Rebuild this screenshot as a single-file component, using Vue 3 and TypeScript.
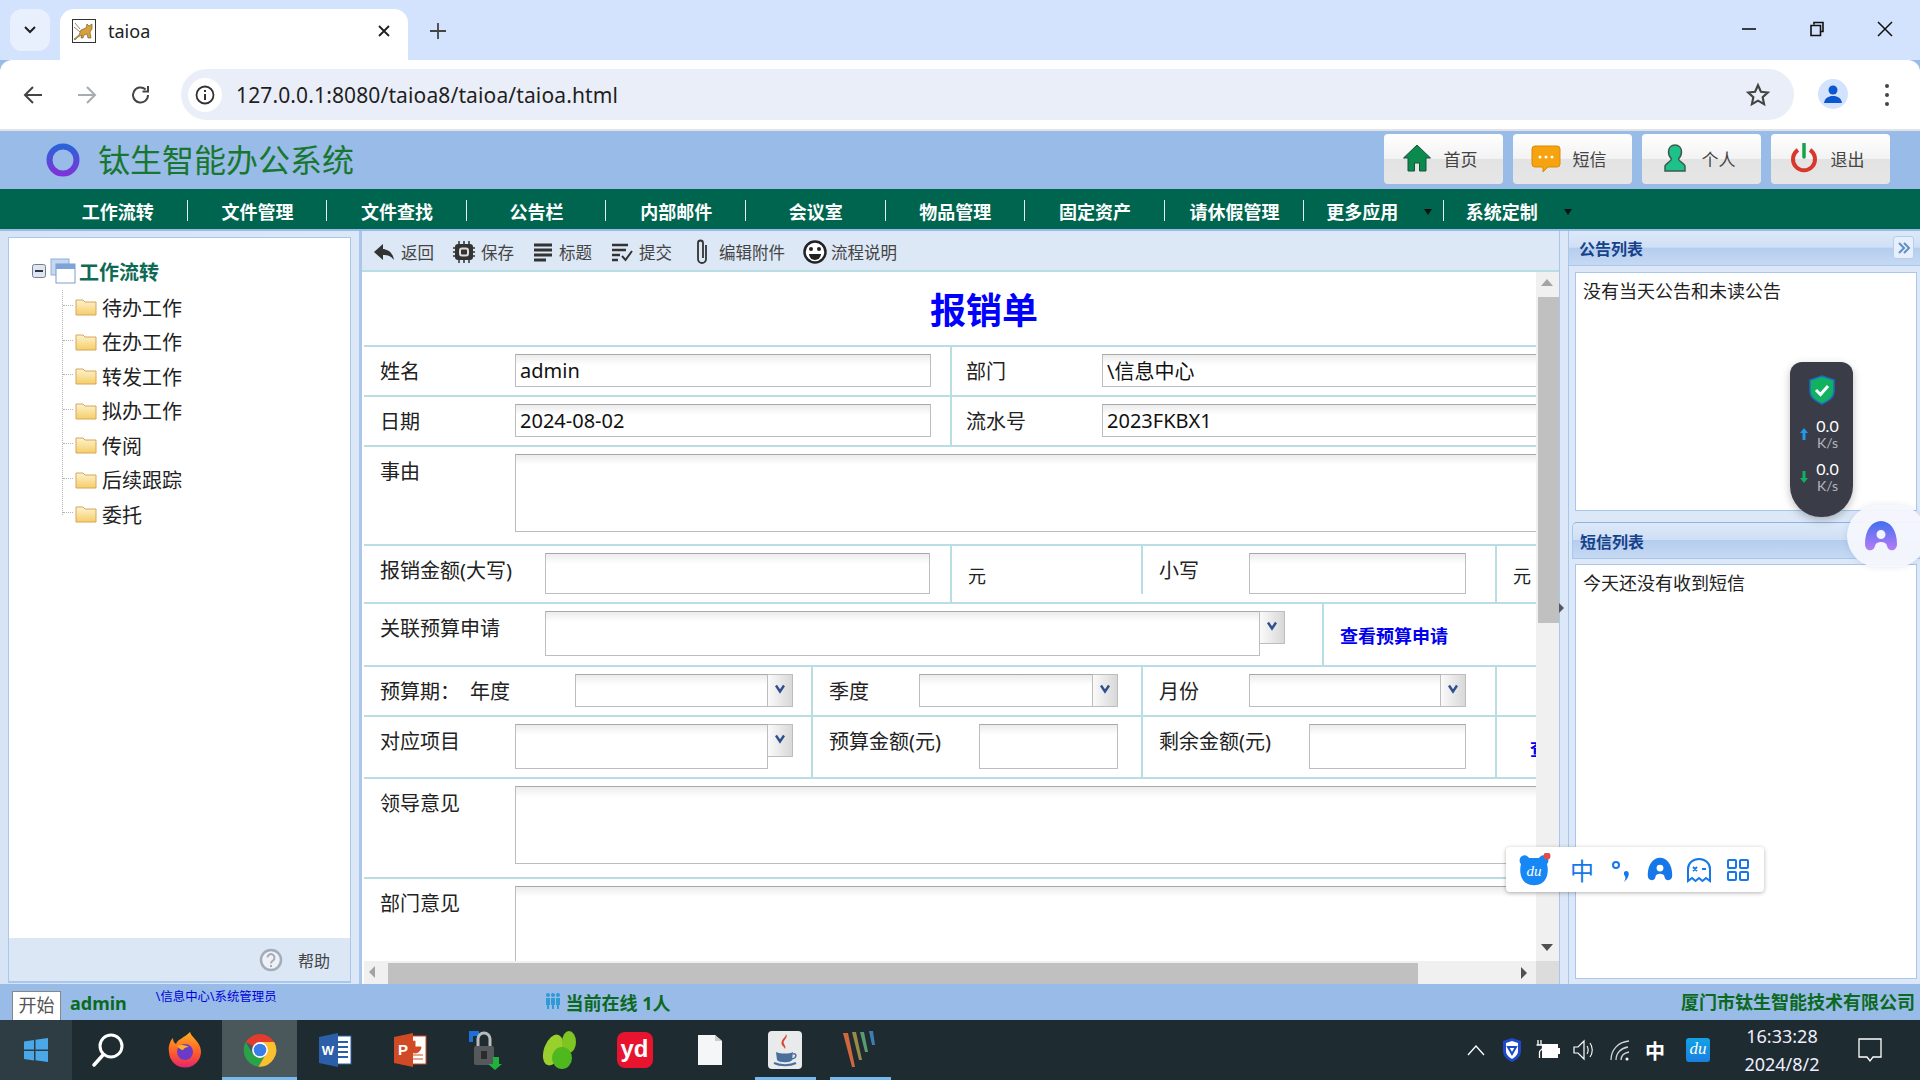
<script setup lang="ts">
const navItems = [
  { label: "工作流转" },
  { label: "文件管理" },
  { label: "文件查找" },
  { label: "公告栏" },
  { label: "内部邮件" },
  { label: "会议室" },
  { label: "物品管理" },
  { label: "固定资产" },
  { label: "请休假管理" },
  { label: "更多应用", more: true },
  { label: "系统定制", more: true },
];

const treeItems = ["待办工作", "在办工作", "转发工作", "拟办工作", "传阅", "后续跟踪", "委托"];
</script>

<template>
  <div class="desk">
    <!-- browser tabs -->
    <div class="tabstrip">
      <div class="tab-search">
        <svg width="14" height="10" viewBox="0 0 14 10"><path d="M2 2l5 5 5-5" fill="none" stroke="#1f1f1f" stroke-width="2" /></svg>
      </div>
      <div class="tab">
        <svg class="favicon" width="24" height="24" viewBox="0 0 24 24">
          <rect x=".5" y=".5" width="23" height="23" fill="#fff" stroke="#333" />
          <path d="M2 20l5-4 2-5 5-2 1-4 2 2 3-2v5l-2 3 1 6h-3l-1-4-3 1-1 3H9l1-3-4 2-3 3z" fill="#d9a13b" stroke="#6b5020" stroke-width=".6" />
          <path d="M2 8l6 5M3 4l5 6" stroke="#6b5020" stroke-width=".7" />
        </svg>
        <span class="tab-title">taioa</span>
        <svg class="tab-close" width="14" height="14" viewBox="0 0 14 14"><path d="M2 2l10 10M12 2L2 12" stroke="#1f1f1f" stroke-width="1.8" /></svg>
      </div>
      <svg class="tab-new" width="18" height="18" viewBox="0 0 18 18"><path d="M9 1v16M1 9h16" stroke="#444" stroke-width="1.8" /></svg>
      <div class="win-controls">
        <svg width="16" height="16" viewBox="0 0 16 16"><path d="M1 8h14" stroke="#111" stroke-width="1.6" /></svg>
        <svg width="16" height="16" viewBox="0 0 16 16"><path d="M5 3.5V1.5h9v9h-2.5M2 4.5h9.5v10H2z" fill="none" stroke="#111" stroke-width="1.6" /></svg>
        <svg width="16" height="16" viewBox="0 0 16 16"><path d="M1 1l14 14M15 1L1 15" stroke="#111" stroke-width="1.5" /></svg>
      </div>
    </div>

    <!-- browser toolbar -->
    <div class="toolbar">
      <div class="tool-btn">
        <svg width="22" height="22" viewBox="0 0 22 22"><path d="M20 11H4M11 3l-8 8 8 8" fill="none" stroke="#444" stroke-width="2" /></svg>
      </div>
      <div class="tool-btn">
        <svg width="22" height="22" viewBox="0 0 22 22"><path d="M2 11h16M11 3l8 8-8 8" fill="none" stroke="#a8abb0" stroke-width="2" /></svg>
      </div>
      <div class="tool-btn">
        <svg width="22" height="22" viewBox="0 0 22 22"><path d="M18 11a7.5 7.5 0 1 1-2.4-5.5M18 2v5.5h-5.5" fill="none" stroke="#444" stroke-width="2" /></svg>
      </div>
      <div class="omnibox">
        <div class="omni-info">
          <svg width="22" height="22" viewBox="0 0 22 22">
            <circle cx="11" cy="11" r="8.5" fill="none" stroke="#333" stroke-width="1.8" />
            <path d="M11 10v6M11 6v2" stroke="#333" stroke-width="2" />
          </svg>
        </div>
        <span class="omni-url">127.0.0.1:8080/taioa8/taioa/taioa.html</span>
        <svg class="omni-star" width="26" height="26" viewBox="0 0 24 24"><path d="M12 3l2.7 6 6.3.7-4.7 4.3 1.3 6.4-5.6-3.2-5.6 3.2 1.3-6.4L3 9.7l6.3-.7z" fill="none" stroke="#444" stroke-width="2" /></svg>
      </div>
      <div class="avatar">
        <svg width="20" height="22" viewBox="0 0 20 22"><circle cx="10" cy="7" r="4.5" fill="#0b57d0" /><path d="M1 20c1-5 4-7 9-7s8 2 9 7z" fill="#0b57d0" /></svg>
      </div>
      <div class="tool-dots"><i></i><i></i><i></i></div>
    </div>

    <!-- oa header -->
    <header class="oa-head">
      <svg class="oa-logo" width="36" height="36" viewBox="0 0 36 36">
        <defs>
          <linearGradient id="ringGrad" x1="0" y1="0" x2="0" y2="1">
            <stop offset="0" stop-color="#2a63d8" />
            <stop offset="1" stop-color="#7c34d8" />
          </linearGradient>
        </defs>
        <circle cx="18" cy="18" r="13.5" fill="none" stroke="url(#ringGrad)" stroke-width="6" />
      </svg>
      <div class="oa-title">钛生智能办公系统</div>
      <div class="head-btns">
        <div class="head-btn">
          <svg width="30" height="30" viewBox="0 0 30 30"><path d="M15 2L1.5 15H6v13h6.5v-8h5v8H24V15h4.5z" fill="#0a8a4c" stroke="#14523a" stroke-width="1" /></svg>
          <span>首页</span>
        </div>
        <div class="head-btn">
          <svg width="30" height="30" viewBox="0 0 30 30">
            <path d="M4 3h22a3 3 0 0 1 3 3v15a3 3 0 0 1-3 3H17l-5 5v-5H4a3 3 0 0 1-3-3V6a3 3 0 0 1 3-3z" fill="#f7a20f" stroke="#d98a08" />
            <circle cx="9" cy="14" r="1.5" fill="#fff" /><circle cx="15" cy="14" r="1.5" fill="#fff" /><circle cx="21" cy="14" r="1.5" fill="#fff" />
          </svg>
          <span>短信</span>
        </div>
        <div class="head-btn">
          <svg width="30" height="30" viewBox="0 0 30 30">
            <path d="M15 2c4 0 6.5 3 6.5 7 0 3-1.5 5.5-3 7 0 2 5.5 4 6.5 7v5H5v-5c1-3 6.5-5 6.500-7-1.500-1.500-3-4-3-7 0-4 2.500-7 6.500-7z" fill="#1cc28a" stroke="#3c5a50" stroke-width="1.5" />
          </svg>
          <span>个人</span>
        </div>
        <div class="head-btn">
          <svg width="30" height="30" viewBox="0 0 30 30">
            <path d="M9 7a11 11 0 1 0 12 0" fill="none" stroke="#d8382c" stroke-width="4" />
            <path d="M15 1v13" stroke="#16a34a" stroke-width="3.5" stroke-linecap="round" />
          </svg>
          <span>退出</span>
        </div>
      </div>
    </header>

    <!-- main menu -->
    <nav class="oa-nav">
      <div v-for="item in navItems" :key="item.label" class="nav-item" :class="{ 'has-more': item.more }">
        <span>{{ item.label }}</span>
        <i v-if="item.more" class="nav-arrow"></i>
      </div>
    </nav>

    <div class="work">
      <!-- tree -->
      <aside class="side">
        <div class="side-box">
          <div class="tree">
            <div class="tree-root">
              <svg class="tree-toggle" width="14" height="14" viewBox="0 0 14 14">
                <rect x=".5" y=".5" width="13" height="13" rx="2" fill="#dfe6f0" stroke="#6f7f94" />
                <path d="M3 7h8" stroke="#334" stroke-width="2" />
              </svg>
              <svg class="tree-root-icon" width="26" height="26" viewBox="0 0 26 26">
                <rect x="1" y="1" width="18" height="16" fill="#c6d8f0" stroke="#8fb0dc" />
                <rect x="6" y="6" width="19" height="19" fill="#fff" stroke="#7c9cc8" />
                <rect x="6" y="6" width="19" height="5" fill="#7da4d8" />
              </svg>
              <strong>工作流转</strong>
            </div>
            <ul class="tree-list">
              <li v-for="name in treeItems" :key="name" class="tree-item">
                <svg width="22" height="18" viewBox="0 0 22 18">
                  <defs>
                    <linearGradient id="folderGrad" x1="0" y1="0" x2="0" y2="1">
                      <stop offset="0" stop-color="#fdf3d0" />
                      <stop offset="1" stop-color="#f6cd68" />
                    </linearGradient>
                  </defs>
                  <path d="M1 2h7l2 2h11v13H1z" fill="url(#folderGrad)" stroke="#d4a65a" />
                </svg>
                <span>{{ name }}</span>
              </li>
            </ul>
          </div>
          <div class="side-foot">
            <svg width="24" height="24" viewBox="0 0 24 24">
              <circle cx="12" cy="12" r="10" fill="#eef2f7" stroke="#a3acb8" stroke-width="2.5" />
              <path d="M8.5 9.5a3.5 3.5 0 1 1 5.5 3c-1.5 1-2 1.5-2 3M12 17v2" fill="none" stroke="#a3acb8" stroke-width="2" />
            </svg>
            <span>帮助</span>
          </div>
        </div>
      </aside>

      <!-- form -->
      <main class="center">
        <div class="form-tools">
          <div class="ft-item">
            <svg width="22" height="20" viewBox="0 0 22 20"><path d="M10 2L1 10l9 8v-5c5 0 8 1 11 5-1-6-4-10-11-11z" fill="#333" /></svg>
            <span>返回</span>
          </div>
          <div class="ft-item">
            <svg width="22" height="24" viewBox="0 0 22 24">
              <path d="M5 4h12a3 3 0 0 1 3 3v10a3 3 0 0 1-3 3H5a3 3 0 0 1-3-3V7a3 3 0 0 1 3-3z" fill="#333" />
              <path d="M6 1v3M11 1v3M16 1v3M6 20v3M11 20v3M16 20v3M0 8h2M0 12h2M0 16h2M20 8h2M20 12h2M20 16h2" stroke="#333" stroke-width="1.5" />
              <rect x="7" y="8.5" width="8" height="7" rx="2" fill="none" stroke="#ddd" stroke-width="2" />
            </svg>
            <span>保存</span>
          </div>
          <div class="ft-item">
            <svg width="20" height="20" viewBox="0 0 20 20"><path d="M1 3h18M1 8h18M1 13h18M1 18h12" stroke="#333" stroke-width="3" /></svg>
            <span>标题</span>
          </div>
          <div class="ft-item">
            <svg width="22" height="20" viewBox="0 0 22 20"><path d="M1 3h16M1 8h14M1 13h8M1 18h6" stroke="#333" stroke-width="2.5" /><path d="M11 14l3.5 4L21 9" fill="none" stroke="#333" stroke-width="2" /></svg>
            <span>提交</span>
          </div>
          <div class="ft-item ft-clip">
            <svg width="16" height="26" viewBox="0 0 16 26"><path d="M12 6v14a4 4 0 0 1-8 0V4a2.5 2.5 0 0 1 5 0v15" fill="none" stroke="#333" stroke-width="1.8" /></svg>
            <span>编辑附件</span>
          </div>
          <div class="ft-item ft-smile">
            <svg width="24" height="24" viewBox="0 0 24 24">
              <circle cx="12" cy="12" r="10.5" fill="#fff" stroke="#222" stroke-width="2.5" />
              <circle cx="8" cy="9" r="2" fill="#222" /><circle cx="16" cy="9" r="2" fill="#222" />
              <path d="M6 14h12a6 6 0 0 1-12 0z" fill="#222" />
            </svg>
            <span>流程说明</span>
          </div>
        </div>

        <div class="sheet">
          <div class="sheet-view">
            <div class="sheet-table">
              <div class="row row-title"><h1>报销单</h1></div>

              <div class="row row-two r-50">
                <div class="cell"><label class="lb-135">姓名</label><input class="fld w-416" value="admin" /></div>
                <div class="cell cell-b"><label class="lb-136">部门</label><input class="fld w-500" value="\信息中心" /></div>
              </div>
              <div class="row row-two r-50">
                <div class="cell"><label class="lb-135">日期</label><input class="fld w-416" value="2024-08-02" /></div>
                <div class="cell cell-b"><label class="lb-136">流水号</label><input class="fld w-500" value="2023FKBX1" /></div>
              </div>
              <div class="row r-99">
                <div class="cell"><label class="lb-135">事由</label><textarea class="fld area-78"></textarea></div>
              </div>

              <div class="row row-four r-58">
                <div class="cell"><label class="lb-165">报销金额(大写)</label><input class="fld w-385 h-41" /></div>
                <div class="cell unit">元</div>
                <div class="cell"><label class="lb-90">小写</label><input class="fld w-217 h-41" /></div>
                <div class="cell unit">元</div>
              </div>

              <div class="row row-link r-63">
                <div class="cell">
                  <label class="lb-165">关联预算申请</label>
                  <div class="combo">
                    <input class="fld w-715 h-45" />
                    <span class="cmb-btn"><svg width="12" height="10" viewBox="0 0 12 10"><path d="M2 1.5l4 6 4-6" fill="none" stroke="#2f4f8f" stroke-width="2.4" /></svg></span>
                  </div>
                </div>
                <div class="cell unit link-cell"><a class="blue-link">查看预算申请</a></div>
              </div>

              <div class="row row-four2 r-50">
                <div class="cell">
                  <label class="lb-90">预算期：</label><label class="lb-105">年度</label>
                  <div class="combo">
                    <input class="fld w-193 h-33" />
                    <span class="cmb-btn"><svg width="12" height="10" viewBox="0 0 12 10"><path d="M2 1.5l4 6 4-6" fill="none" stroke="#2f4f8f" stroke-width="2.4" /></svg></span>
                  </div>
                </div>
                <div class="cell">
                  <label class="lb-90">季度</label>
                  <div class="combo">
                    <input class="fld w-174 h-33" />
                    <span class="cmb-btn"><svg width="12" height="10" viewBox="0 0 12 10"><path d="M2 1.5l4 6 4-6" fill="none" stroke="#2f4f8f" stroke-width="2.4" /></svg></span>
                  </div>
                </div>
                <div class="cell">
                  <label class="lb-90">月份</label>
                  <div class="combo">
                    <input class="fld w-192 h-33" />
                    <span class="cmb-btn"><svg width="12" height="10" viewBox="0 0 12 10"><path d="M2 1.5l4 6 4-6" fill="none" stroke="#2f4f8f" stroke-width="2.4" /></svg></span>
                  </div>
                </div>
                <div class="cell"></div>
              </div>

              <div class="row row-four2 r-62">
                <div class="cell">
                  <label class="lb-135">对应项目</label>
                  <div class="combo">
                    <input class="fld w-253 h-45" />
                    <span class="cmb-btn"><svg width="12" height="10" viewBox="0 0 12 10"><path d="M2 1.5l4 6 4-6" fill="none" stroke="#2f4f8f" stroke-width="2.4" /></svg></span>
                  </div>
                </div>
                <div class="cell"><label class="lb-150">预算金额(元)</label><input class="fld w-139 h-45" /></div>
                <div class="cell"><label class="lb-150">剩余金额(元)</label><input class="fld w-157 h-45" /></div>
                <div class="cell unit link-cell link-far"><a class="blue-link">查看预算</a></div>
              </div>

              <div class="row r-100">
                <div class="cell"><label class="lb-135">领导意见</label><textarea class="fld area-78"></textarea></div>
              </div>
              <div class="row r-100">
                <div class="cell"><label class="lb-135">部门意见</label><textarea class="fld area-78"></textarea></div>
              </div>
            </div>
          </div>

          <div class="vbar">
            <i class="arr arr-up"></i>
            <div class="vthumb"></div>
            <i class="arr arr-down"></i>
          </div>
          <div class="hbar">
            <i class="arr arr-left"></i>
            <div class="hthumb"></div>
            <i class="arr arr-right"></i>
          </div>
          <div class="corner"></div>
        </div>
      </main>

      <div class="splitter"><i></i></div>

      <!-- right panels -->
      <aside class="right">
        <div class="rp rp-top">
          <div class="rp-title">
            <span>公告列表</span>
            <div class="rp-collapse">
              <svg width="14" height="14" viewBox="0 0 14 14"><path d="M2 2l5 5-5 5M7 2l5 5-5 5" fill="none" stroke="#5f8fc8" stroke-width="2" /></svg>
            </div>
          </div>
          <div class="rp-wrap"><div class="rp-body">没有当天公告和未读公告</div></div>
        </div>
        <div class="rp rp-bottom">
          <div class="rp-title rp-title2"><span>短信列表</span></div>
          <div class="rp-wrap"><div class="rp-body">今天还没有收到短信</div></div>
        </div>
      </aside>
    </div>

    <footer class="status">
      <div class="start-btn">开始</div>
      <span class="st-user">admin</span>
      <span class="st-dept">\信息中心\系统管理员</span>
      <svg class="st-icon" width="16" height="18" viewBox="0 0 16 18" fill="#2e9ad6">
        <circle cx="3" cy="3" r="2" /><circle cx="8" cy="3" r="2" /><circle cx="13" cy="3" r="2" />
        <path d="M1 6h4v7H4v4H2v-4H1zM6 6h4v7H9v4H7v-4H6zM11 6h4v7h-1v4h-2v-4h-1z" />
      </svg>
      <span class="st-online">当前在线 1人</span>
      <span class="st-company">厦门市钛生智能技术有限公司</span>
    </footer>

    <div class="taskbar">
      <div class="task-cell task-start">
        <svg width="26" height="26" viewBox="0 0 26 26" fill="#4aa8e8"><path d="M1 4.5l10-1.5v9.5H1zM12.5 2.800L25 1v11.500H12.500zM1 14h10v9.500L1 22zM12.500 14H25v11l-12.500-1.800z" /></svg>
      </div>
      <div class="task-cell task-search">
        <svg width="34" height="36" viewBox="0 0 34 36"><circle cx="20" cy="14" r="11" fill="none" stroke="#fff" stroke-width="3" /><path d="M12 23L3 33" stroke="#fff" stroke-width="3.5" stroke-linecap="round" /></svg>
      </div>
      <div class="task-cell">
        <svg width="36" height="38" viewBox="0 0 36 38">
          <defs>
            <linearGradient id="foxGrad" x1="0" y1="0" x2="0" y2="1">
              <stop offset="0" stop-color="#ffb01f" /><stop offset=".6" stop-color="#ff5a2a" /><stop offset="1" stop-color="#e5256e" />
            </linearGradient>
          </defs>
          <path d="M23 1c1 5 10 9 11 19A16 16 0 0 1 2 21C1 15 3 10 6 7c0 3 1 5 3 6 2-5 8-6 14-12z" fill="url(#foxGrad)" />
          <circle cx="18" cy="21" r="8" fill="#6b3bc8" />
          <path d="M10 15c4-2 9-1 12 1-3 0-5 1-6 3-2 0-4-2-6-4z" fill="#ffb01f" />
        </svg>
      </div>
      <div class="task-cell task-active">
        <svg width="38" height="38" viewBox="0 0 48 48">
          <path d="M24 24L6 14A21 21 0 0 1 42 14H24z" fill="#e33b2e" />
          <path d="M24 24l-9 5L6 14A21 21 0 0 0 22 45l9-15z" fill="#2aa24a" />
          <path d="M24 14h18a21 21 0 0 1-20 31l10-17z" fill="#fbc02d" />
          <circle cx="24" cy="24" r="10" fill="#fff" /><circle cx="24" cy="24" r="8" fill="#3a7de8" />
        </svg>
      </div>
      <div class="task-cell">
        <svg width="34" height="34" viewBox="0 0 34 34">
          <rect x="10" y="3" width="23" height="28" fill="#fff" stroke="#2b5faa" />
          <path d="M18 9h12M18 14h12M18 19h12M18 24h12" stroke="#2b5faa" stroke-width="2" />
          <path d="M1 4l19-4v34L1 30z" fill="#2b5faa" />
          <text x="10" y="22" font-size="13" font-family="Liberation Sans" font-weight="700" fill="#fff" text-anchor="middle">W</text>
        </svg>
      </div>
      <div class="task-cell">
        <svg width="34" height="34" viewBox="0 0 34 34">
          <rect x="10" y="3" width="23" height="28" fill="#fff" stroke="#d04a25" />
          <path d="M22 8a6 6 0 1 0 6 6h-6zM20 22h10M20 26h10" fill="#d04a25" stroke="#d04a25" />
          <path d="M1 4l19-4v34L1 30z" fill="#d04a25" />
          <text x="10" y="22" font-size="15" font-family="Liberation Sans" font-weight="700" fill="#fff" text-anchor="middle">P</text>
        </svg>
      </div>
      <div class="task-cell">
        <svg width="36" height="40" viewBox="0 0 36 40">
          <path d="M2 1h10v5H6v6H2z" fill="#1a6fd8" />
          <rect x="7" y="16" width="20" height="19" rx="2" fill="#55595c" />
          <path d="M11 16V9a6 6 0 0 1 12 0v7" fill="none" stroke="#b9bcbe" stroke-width="3" />
          <rect x="14" y="21" width="6" height="8" fill="#2a2c2e" />
          <path d="M26 27h6v7h3l-7 6-7-6h5z" fill="#1fb23c" />
        </svg>
      </div>
      <div class="task-cell">
        <svg width="36" height="40" viewBox="0 0 36 40">
          <ellipse cx="11" cy="20" rx="9" ry="16" fill="#9ad02e" transform="rotate(20 11 20)" />
          <ellipse cx="27" cy="12" rx="7" ry="11" fill="#7ec422" />
          <ellipse cx="20" cy="28" rx="10" ry="11" fill="#4fb81e" />
        </svg>
      </div>
      <div class="task-cell">
        <div class="yd-tile">yd</div>
      </div>
      <div class="task-cell">
        <svg width="26" height="32" viewBox="0 0 26 36" preserveAspectRatio="none"><path d="M1 1h17l7 7v27H1z" fill="#f4f6f8" /><path d="M18 1v7h7z" fill="#c8ccd0" /></svg>
      </div>
      <div class="task-cell task-open">
        <svg width="36" height="40" viewBox="0 0 36 40">
          <rect x="1" y="1" width="34" height="38" rx="4" fill="#e8eaec" />
          <path d="M19 4c3 4-4 6-2 10 1 2 2 3 1 5-1-3-5-4-3-8 1-3 4-4 4-7z" fill="#d9482b" />
          <path d="M9 22c5 2 13 2 17 0l-1 8c-1 3-13 3-15 0z" fill="#4a6f9c" />
          <path d="M7 33c6 3 16 3 22 0" fill="none" stroke="#4a6f9c" stroke-width="2" />
          <path d="M26 24c4-1 4 4-1 5" fill="none" stroke="#4a6f9c" stroke-width="1.5" />
        </svg>
      </div>
      <div class="task-cell task-open">
        <svg width="36" height="40" viewBox="0 0 36 40">
          <path d="M1 3h5l7 34h-3z" fill="#d0673f" />
          <path d="M10 2h4l6 28h-3z" fill="#9a8a4a" />
          <path d="M18 2h4l4 20h-3z" fill="#5a9a72" />
          <path d="M27 1h4l2 14h-3z" fill="#3f7db8" />
        </svg>
      </div>

      <div class="tray">
        <div class="tray-cell t36">
          <svg width="18" height="12" viewBox="0 0 18 12"><path d="M1 11l8-9 8 9" fill="none" stroke="#fff" stroke-width="1.3" /></svg>
        </div>
        <div class="tray-cell t36">
          <svg width="22" height="26" viewBox="0 0 22 26">
            <path d="M11 1l9 3v10c0 6-5 9-9 11-4-2-9-5-9-11V4z" fill="#1f49c8" />
            <path d="M11 4l6 2v8c0 4-3 6-6 8-3-2-6-4-6-8V6z" fill="#fff" />
            <path d="M7 10h8l-4 7z" fill="none" stroke="#1f49c8" stroke-width="2" />
          </svg>
        </div>
        <div class="tray-cell t36">
          <svg width="26" height="22" viewBox="0 0 26 22">
            <rect x="7" y="5" width="16" height="14" fill="#fff" /><rect x="23" y="9" width="2" height="6" fill="#fff" />
            <path d="M3 1v5M6 1v5M1.5 6h6v3c0 2-3 2-3 4v6" fill="none" stroke="#fff" stroke-width="1.3" />
          </svg>
        </div>
        <div class="tray-cell t36">
          <svg width="24" height="24" viewBox="0 0 24 24"><path d="M2 9h4l6-6v18l-6-6H2z" fill="none" stroke="#fff" stroke-width="1.2" /><path d="M15 8c1.5 2 1.5 6 0 8M18 5c3 4 3 10 0 14" fill="none" stroke="#fff" stroke-width="1.1" /></svg>
        </div>
        <div class="tray-cell t36">
          <svg width="24" height="24" viewBox="0 0 24 24"><path d="M3 22C3 12 10 4 21 3M8 22c0-7 5-12 12-13M13 22c0-4 3-7 8-8" fill="none" stroke="#cfd4d6" stroke-width="1.3" /><circle cx="19" cy="21" r="1.5" fill="#fff" /></svg>
        </div>
        <div class="tray-cell t34 tray-ime">中</div>
        <div class="tray-cell t52"><div class="du-tile">du</div></div>
        <div class="clock">
          <span>16:33:28</span>
          <span>2024/8/2</span>
        </div>
        <div class="tray-cell t60">
          <svg width="26" height="26" viewBox="0 0 26 26"><path d="M2 2h22v18h-8l-3 4-3-4H2z" fill="none" stroke="#fff" stroke-width="1.3" /></svg>
        </div>
      </div>
    </div>

    <!-- floating widgets over the page -->
    <div class="net-widget">
      <svg width="26" height="30" viewBox="0 0 26 30">
        <path d="M13 1l12 4v11c0 7-6 10-12 13C7 26 1 23 1 16V5z" fill="#10b160" stroke="#1f68c8" stroke-width="1.5" />
        <path d="M7 15l4.5 4.5L19 11" fill="none" stroke="#fff" stroke-width="3" />
      </svg>
      <div class="net-row net-first">
        <svg width="8" height="12" viewBox="0 0 8 12"><path d="M4 0l4 5H5.5v7h-3V5H0z" fill="#1e9ae8" /></svg>
        <div class="net-val"><b>0.0</b><small>K/s</small></div>
      </div>
      <div class="net-row">
        <svg width="8" height="12" viewBox="0 0 8 12"><path d="M4 12L0 7h2.5V0h3v7H8z" fill="#10b160" /></svg>
        <div class="net-val"><b>0.0</b><small>K/s</small></div>
      </div>
    </div>

    <div class="ai-float">
      <svg width="34" height="34" viewBox="0 0 34 34">
        <defs>
          <linearGradient id="aiGrad" x1="0" y1="0" x2="0" y2="1">
            <stop offset="0" stop-color="#3f6ff0" /><stop offset="1" stop-color="#b77cf6" />
          </linearGradient>
        </defs>
        <path fill-rule="evenodd" d="M17 1C8 1 1 10 1 24c0 8 9 8 10 2 .5-3 3-4 6-4s5.500 1 6 4c1 6 10 6 10-2C33 10 26 1 17 1zm0 9a4.500 4.500 0 1 1 0 9 4.500 4.500 0 0 1 0-9z" fill="url(#aiGrad)" />
      </svg>
    </div>

    <div class="ime-bar">
      <svg class="ime-du" width="34" height="34" viewBox="0 0 34 34">
        <path d="M5 3c3-2 6 0 7 2h10c1-2 4-4 7-2s3 6 1 8c2 8 0 16-5 19-5 3-11 3-16 0-5-3-7-11-5-19-2-2-2-6 1-8z" fill="#1787f5" />
        <text x="17" y="23" font-size="15" font-family="Liberation Serif" font-style="italic" fill="#fff" text-anchor="middle">du</text>
        <circle cx="30" cy="3" r="3.5" fill="#e34b4b" />
      </svg>
      <span class="ime-slot ime-zh">中</span>
      <span class="ime-slot"><svg width="24" height="28" viewBox="0 0 24 28"><circle cx="7" cy="9" r="3" fill="none" stroke="#1677e8" stroke-width="2" /><path d="M17 15c3 0 4 3 1 8l-3 3c1-2 2-4 1-6-2-2-1-5 1-5z" fill="#1677e8" /></svg></span>
      <span class="ime-slot"><svg width="26" height="26" viewBox="0 0 34 34"><path fill-rule="evenodd" d="M17 1C8 1 1 10 1 24c0 8 9 8 10 2 .5-3 3-4 6-4s5.500 1 6 4c1 6 10 6 10-2C33 10 26 1 17 1zm0 9a4.500 4.500 0 1 1 0 9 4.500 4.500 0 0 1 0-9z" fill="#1677e8" /></svg></span>
      <span class="ime-slot"><svg width="26" height="26" viewBox="0 0 26 26"><path d="M2 24V12C2 6 7 2 13 2s11 4 11 10v12l-4-3-3.500 3-3.500-3-3.500 3L6 21z" fill="none" stroke="#1677e8" stroke-width="2" /><path d="M7 10l4 4M11 10l-4 4M16 12h4" stroke="#1677e8" stroke-width="1.8" /></svg></span>
      <span class="ime-slot"><svg width="24" height="24" viewBox="0 0 24 24"><g fill="none" stroke="#1677e8" stroke-width="2"><rect x="2" y="2" width="8" height="8" rx="1" /><rect x="14" y="2" width="8" height="8" rx="1" /><rect x="2" y="14" width="8" height="8" rx="1" /><rect x="14" y="14" width="8" height="8" rx="1" /></g></svg></span>
    </div>
  </div>
</template>

<style>
html,
body {
  margin: 0;
  background: #99bbe8;
}
</style>

<style scoped>
.desk {
  position: relative;
  width: 1920px;
  height: 1080px;
  overflow: hidden;
  display: flex;
  flex-direction: column;
  font-family: "Noto Sans", "Noto Sans CJK SC", sans-serif;
  color: #222;
}

/* browser chrome */
.tabstrip {
  height: 60px;
  flex: none;
  background: #d3e3fd;
  display: flex;
  align-items: flex-start;
  padding-left: 10px;
  box-sizing: border-box;
}
.tab-search {
  width: 40px;
  height: 42px;
  margin-top: 9px;
  border-radius: 12px;
  background: #e9f0fd;
  display: flex;
  align-items: center;
  justify-content: center;
}
.tab {
  width: 348px;
  height: 51px;
  margin: 9px 0 0 10px;
  background: #fff;
  border-radius: 14px 14px 0 0;
  display: flex;
  align-items: center;
  box-sizing: border-box;
  padding: 0 17px 8px 12px;
}
.favicon {
  flex: none;
}
.tab-title {
  margin-left: 12px;
  font-size: 18px;
  color: #222;
  flex: 1;
}
.tab-new {
  margin: 22px 0 0 21px;
}
.win-controls {
  margin-left: auto;
  display: flex;
  gap: 52px;
  padding: 21px 27px 0 0;
}
.toolbar {
  height: 71px;
  flex: none;
  box-sizing: border-box;
  background: #fff;
  border-bottom: 2px solid #e1e3e6;
  border-radius: 12px 12px 0 0;
  display: flex;
  align-items: flex-start;
  padding: 9px 0 0 6px;
}
.tool-btn {
  width: 54px;
  height: 51px;
  display: flex;
  align-items: center;
  justify-content: center;
}
.omnibox {
  width: 1613px;
  height: 51px;
  margin-left: 13px;
  border-radius: 26px;
  background: #e9eef8;
  display: flex;
  align-items: center;
  padding-left: 7px;
  box-sizing: border-box;
}
.omni-info {
  width: 34px;
  height: 34px;
  border-radius: 50%;
  background: #fff;
  display: flex;
  align-items: center;
  justify-content: center;
}
.omni-url {
  margin-left: 14px;
  font-size: 21px;
  letter-spacing: 0.13px;
  color: #1f1f1f;
  flex: 1;
}
.omni-star {
  margin-right: 23px;
}
.avatar {
  width: 30px;
  height: 30px;
  margin: 10px 0 0 24px;
  border-radius: 50%;
  background: #d3e3fd;
  display: flex;
  align-items: center;
  justify-content: center;
}
.tool-dots {
  display: flex;
  flex-direction: column;
  gap: 5px;
  margin: 15px 0 0 37px;
}
.tool-dots i {
  width: 4px;
  height: 4px;
  border-radius: 50%;
  background: #444;
}

/* oa header + nav */
.oa-head {
  height: 58px;
  flex: none;
  background: #99bbe8;
  display: flex;
  align-items: flex-start;
  padding-left: 45px;
  box-sizing: border-box;
}
.oa-logo {
  margin-top: 11px;
}
.oa-title {
  margin: 7px 0 0 17px;
  font-size: 32px;
  line-height: 44px;
  color: #17772f;
}
.head-btns {
  margin-left: auto;
  padding: 3px 30px 0 0;
  display: flex;
  gap: 9.5px;
}
.head-btn {
  width: 119.5px;
  height: 50px;
  border-radius: 4px;
  background: linear-gradient(#fff, #f3f3f3 49%, #e3e3e3 50%, #e6e6e6);
  box-sizing: border-box;
  padding: 0 0 2px 18px;
  display: flex;
  align-items: center;
  gap: 12px;
  font-size: 17px;
  color: #444;
}
.oa-nav {
  height: 40px;
  flex: none;
  background: #00654f;
  display: flex;
  align-items: center;
  padding-left: 48px;
  box-sizing: border-box;
}
.nav-item {
  position: relative;
  width: 139.6px;
  height: 40px;
  flex: none;
  box-sizing: border-box;
  padding-top: 4px;
  display: flex;
  align-items: center;
  justify-content: center;
  color: #fff;
  font-weight: 700;
  font-size: 18px;
}
.nav-item:not(:last-child)::after {
  content: "";
  position: absolute;
  right: 0;
  top: 11px;
  height: 21px;
  width: 1px;
  background: #e4efec;
}
.has-more {
  padding-right: 24px;
}
.nav-arrow {
  position: absolute;
  right: 12px;
  top: 20px;
  border: 4px solid transparent;
  border-top: 6px solid #111;
  border-bottom: 0;
}

/* work area */
.work {
  height: 755px;
  flex: none;
  background: #99bbe8;
  display: flex;
  box-sizing: border-box;
  padding-top: 2px;
}
.side {
  width: 362px;
  flex: none;
  box-sizing: border-box;
  padding: 6px 0 0 8px;
  background: linear-gradient(90deg, #d6e4f6, #dce8f8);
  border-right: 3px solid #a9c6ec;
}
.side-box {
  width: 343px;
  height: 746px;
  box-sizing: border-box;
  border: 1px solid #a9c6ec;
  border-bottom-width: 2px;
  background: #fff;
  display: flex;
  flex-direction: column;
}
.tree {
  flex: 1;
  padding: 18px 0 0 23px;
}
.tree-root {
  display: flex;
  align-items: center;
  height: 30px;
  font-size: 20px;
  color: #0f6a55;
}
.tree-toggle {
  margin-right: 4px;
}
.tree-root-icon {
  margin-right: 3px;
  flex: none;
}
.tree-root strong {
  font-weight: 700;
}
.tree-list {
  list-style: none;
  margin: 4px 0 0 30px;
  padding: 0;
  border-left: 1px dotted #b5b5b5;
  height: 225px;
}
.tree-item {
  position: relative;
  height: 34.5px;
  display: flex;
  align-items: center;
  padding-left: 12px;
  font-size: 20px;
  color: #222;
}
.tree-item::before {
  content: "";
  position: absolute;
  left: 0;
  top: 15px;
  width: 10px;
  border-top: 1px dotted #b5b5b5;
}
.tree-item span {
  margin-left: 5px;
}
.side-foot {
  height: 43px;
  flex: none;
  background: #dce7f5;
  display: flex;
  align-items: center;
  justify-content: flex-end;
  gap: 15px;
  padding-right: 20px;
  font-size: 16px;
  color: #444;
}

.center {
  width: 1197px;
  flex: none;
  display: flex;
  flex-direction: column;
}
.form-tools {
  height: 41px;
  flex: none;
  box-sizing: border-box;
  background: linear-gradient(#dce8f7, #dde8f6);
  border-bottom: 2px solid #b8dde2;
  display: flex;
  align-items: center;
  padding: 2px 0 0 11px;
  font-size: 16.5px;
  color: #444;
}
.ft-item {
  display: flex;
  align-items: center;
  gap: 6px;
  margin-right: 19px;
}
.ft-clip {
  margin-left: 3px;
  gap: 9px;
}
.ft-smile {
  gap: 4px;
  margin-left: -1px;
}
.sheet {
  position: relative;
  flex: 1;
  min-height: 0;
  background: #fff;
}
.sheet-view {
  position: absolute;
  left: 2px;
  top: 0;
  width: 1172px;
  height: 689px;
  overflow: hidden;
}
.sheet-table {
  width: 1400px;
  font-size: 20px;
  color: #222;
}
.row {
  box-sizing: border-box;
  border-bottom: 2px solid #b8dde2;
  display: grid;
  grid-template-columns: 1fr;
}
.row-title {
  height: 75px;
  display: flex;
  justify-content: flex-start;
  padding-left: 566px;
  align-items: center;
}
.row-title h1 {
  margin: 4px 0 0;
  font-size: 36px;
  font-weight: 700;
  color: #0000ff;
  line-height: 50px;
}
.r-50 {
  height: 50px;
}
.r-58 {
  height: 58px;
}
.r-62 {
  height: 62px;
}
.r-63 {
  height: 63px;
}
.r-99 {
  height: 99px;
}
.r-100 {
  height: 100px;
}
.row-two {
  grid-template-columns: 588px 1fr;
}
.row-four {
  grid-template-columns: 588px 191px 354px 1fr;
}
.row-four2 {
  grid-template-columns: 449px 330px 354px 1fr;
}
.row-link {
  grid-template-columns: 960px 1fr;
}
.cell {
  display: flex;
  align-items: flex-start;
  box-sizing: border-box;
  padding: 7px 0 0 16px;
  border-right: 2px solid #b8dde2;
  min-width: 0;
  overflow: hidden;
}
.row > .cell:last-child {
  border-right: 0;
}
.cell-b {
  padding-left: 14px;
}
.cell label {
  flex: none;
  line-height: 36px;
  height: 36px;
  white-space: nowrap;
}
.lb-135 {
  width: 135px;
}
.lb-136 {
  width: 136px;
}
.lb-165 {
  width: 165px;
}
.lb-150 {
  width: 150px;
}
.lb-90 {
  width: 90px;
}
.lb-105 {
  width: 105px;
}
.unit {
  padding-top: 9px;
  font-size: 18px;
  align-items: center;
  height: 48px;
}
.link-cell {
  padding-top: 13px;
}
.link-far {
  padding-left: 33px;
}
.blue-link {
  color: #0000ee;
  font-weight: 700;
  font-size: 18px;
  white-space: nowrap;
}
.fld {
  flex: none;
  box-sizing: border-box;
  height: 33px;
  border: 1px solid #bdbdbd;
  border-top-color: #a8a8a8;
  background: linear-gradient(#ececec, #fff 10px);
  font: inherit;
  font-size: 20px;
  color: #111;
  padding: 0 4px;
  margin: 0;
  outline: none;
  border-radius: 0;
}
.w-416 {
  width: 416px;
}
.w-500 {
  width: 500px;
}
.w-385 {
  width: 385px;
}
.w-217 {
  width: 217px;
}
.w-715 {
  width: 715px;
}
.w-193 {
  width: 193px;
}
.w-174 {
  width: 174px;
}
.w-192 {
  width: 192px;
}
.w-253 {
  width: 253px;
}
.w-139 {
  width: 139px;
}
.w-157 {
  width: 157px;
}
.h-41 {
  height: 41px;
}
.h-45 {
  height: 45px;
}
.h-33 {
  height: 33px;
}
.area-78 {
  width: 1100px;
  height: 78px;
  resize: none;
  display: block;
}
.combo {
  display: flex;
  align-items: flex-start;
  flex: none;
}
.cmb-btn {
  width: 25px;
  height: 33px;
  box-sizing: border-box;
  border: 1px solid #bdbdbd;
  border-left: 0;
  background: linear-gradient(90deg, #fafafa, #d8d8d8);
  display: flex;
  justify-content: center;
  padding-top: 9px;
}

/* scrollbars */
.vbar {
  position: absolute;
  left: 1174px;
  top: 0;
  bottom: 23px;
  width: 23px;
  background: #f0f0f0;
}
.vthumb {
  position: absolute;
  left: 2px;
  right: 0;
  top: 25px;
  height: 326px;
  background: #c0c0c0;
}
.hbar {
  position: absolute;
  left: 2px;
  bottom: 0;
  width: 1172px;
  height: 23px;
  background: #f0f0f0;
}
.hthumb {
  position: absolute;
  left: 24px;
  top: 2px;
  bottom: 0;
  width: 1030px;
  background: #c0c0c0;
}
.corner {
  position: absolute;
  right: 0;
  bottom: 0;
  width: 23px;
  height: 23px;
  background: #dcdcdc;
}
.arr {
  position: absolute;
  width: 0;
  height: 0;
  border: 6px solid transparent;
}
.arr-up {
  left: 5px;
  top: 7px;
  border-bottom: 7px solid #a3a3a3;
  border-top: 0;
}
.arr-down {
  left: 5px;
  bottom: 10px;
  border-top: 7px solid #505050;
  border-bottom: 0;
}
.arr-left {
  left: 5px;
  top: 5px;
  border-right: 6px solid #a3a3a3;
  border-left: 0;
}
.arr-right {
  right: 9px;
  top: 6px;
  border-left: 6px solid #505050;
  border-right: 0;
}
.splitter {
  position: relative;
  width: 9px;
  flex: none;
  background: #dce8f8;
  border-left: 1px solid #a9c6ec;
  box-sizing: border-box;
}
.splitter i {
  position: absolute;
  left: -1px;
  top: 372px;
  border: 5px solid transparent;
  border-left: 5px solid #556;
  border-right: 0;
}

/* right side panels */
.right {
  flex: 1;
  min-width: 0;
  background: #dce8f8;
  border-left: 1px solid #a9c6ec;
  display: flex;
  flex-direction: column;
}
.rp {
  display: flex;
  flex-direction: column;
}
.rp-top {
  height: 285px;
}
.rp-bottom {
  margin-top: 6px;
  flex: 1;
  min-height: 0;
  padding-left: 3px;
}
.rp-title {
  position: relative;
  height: 35px;
  flex: none;
  box-sizing: border-box;
  padding-left: 10px;
  display: flex;
  align-items: center;
  font-size: 16px;
  font-weight: 700;
  color: #15428b;
  background: linear-gradient(#dde9f9, #cfdff5 48%, #b5cdee 50%, #c6d9f3);
  border-bottom: 1px solid #a9c6ec;
}
.rp-title2 {
  height: 37px;
  padding-left: 7px;
  border-top: 1px solid #8fb3e3;
  border-left: 1px solid #a9c6ec;
  border-radius: 5px 0 0 0;
}
.rp-collapse {
  position: absolute;
  right: 6px;
  top: 5px;
  width: 21px;
  height: 23px;
  box-sizing: border-box;
  border: 1px solid #b7cfee;
  border-radius: 3px;
  background: #e6effb;
  display: flex;
  align-items: center;
  justify-content: center;
}
.rp-wrap {
  flex: 1;
  min-height: 0;
  box-sizing: border-box;
  padding: 6px 3px 5px 6px;
}
.rp-bottom .rp-wrap {
  padding-left: 3px;
  padding-top: 5px;
}
.rp-body {
  height: 100%;
  box-sizing: border-box;
  background: #fff;
  border: 1px solid #a9c6ec;
  padding: 5px 7px;
  font-size: 18px;
  line-height: 26px;
  color: #222;
}

/* status bar */
.status {
  height: 36px;
  flex: none;
  background: #99bbe8;
  display: flex;
  align-items: flex-start;
  box-sizing: border-box;
  padding-left: 12px;
  font-weight: 700;
  font-size: 18px;
  color: #0b6a1f;
}
.start-btn {
  width: 49px;
  height: 29px;
  margin-top: 7px;
  box-sizing: border-box;
  background: #fff;
  border: 1px solid #888;
  border-bottom: 0;
  font-size: 18px;
  line-height: 27px;
  text-align: center;
  font-weight: 400;
  color: #555;
}
.st-user {
  margin: 6px 0 0 9px;
  line-height: 26px;
}
.st-dept {
  margin: 3px 0 0 29px;
  font-size: 12.4px;
  font-weight: 400;
  line-height: 20px;
  color: #0000dd;
}
.st-icon {
  margin: 8px 0 0 268px;
}
.st-online {
  margin: 6px 0 0 5px;
  line-height: 26px;
}
.st-company {
  margin: 5px 5px 0 auto;
  line-height: 26px;
}

/* taskbar */
.taskbar {
  height: 60px;
  flex: none;
  background: #1e2b30;
  display: flex;
}
.task-cell {
  position: relative;
  width: 75px;
  flex: none;
  display: flex;
  align-items: center;
  justify-content: center;
}
.task-start {
  width: 72px;
  background: #2e3d43;
}
.task-search {
  padding-right: 4px;
  box-sizing: border-box;
}
.task-active {
  background: #4a585c;
}
.task-open::after {
  content: "";
  position: absolute;
  bottom: 0;
  height: 3px;
  background: #76b9ed;
  left: 8px;
  right: 6px;
}
.task-active::after {
  content: "";
  position: absolute;
  bottom: 0;
  height: 3px;
  background: #76b9ed;
  left: 0;
  right: 0;
}
.yd-tile {
  width: 36px;
  height: 36px;
  border-radius: 8px;
  background: #e8132f;
  color: #fff;
  font: 700 24px/34px "Liberation Sans", sans-serif;
  text-align: center;
}
.tray {
  margin-left: auto;
  display: flex;
  padding-right: 20px;
  color: #fff;
}
.tray-cell {
  display: flex;
  align-items: center;
  justify-content: center;
  flex: none;
}
.t36 {
  width: 36px;
}
.t34 {
  width: 34px;
}
.t52 {
  width: 52px;
}
.t60 {
  width: 60px;
}
.tray-ime {
  font-size: 20px;
  font-weight: 700;
}
.du-tile {
  width: 24px;
  height: 24px;
  background: linear-gradient(#12a2e6, #1a7fe0);
  border-radius: 3px;
  font: italic 17px/22px "Liberation Serif", serif;
  text-align: center;
  color: #fff;
}
.clock {
  width: 116px;
  flex: none;
  display: flex;
  flex-direction: column;
  align-items: center;
  font-size: 18px;
  line-height: 28px;
  padding-top: 2px;
  box-sizing: border-box;
  color: #eef;
}

/* overlays */
.net-widget {
  position: absolute;
  left: 1790px;
  top: 362px;
  width: 63px;
  height: 155px;
  box-sizing: border-box;
  padding-top: 13px;
  border-radius: 12px 12px 31px 31px;
  background: #3a3d47;
  box-shadow: 0 3px 8px rgba(0, 0, 0, 0.25);
  display: flex;
  flex-direction: column;
  align-items: center;
  color: #fff;
  font-family: Lato, sans-serif;
}
.net-row {
  display: flex;
  align-items: center;
  gap: 8px;
  height: 43px;
  margin-left: -4px;
}
.net-first {
  margin-top: 7px;
}
.net-val {
  display: flex;
  flex-direction: column;
  align-items: center;
}
.net-val b {
  font-weight: 400;
  font-size: 16px;
  line-height: 18px;
}
.net-val small {
  font-size: 14px;
  line-height: 15px;
  color: #b4b6bc;
}
.ai-float {
  position: absolute;
  left: 1847px;
  top: 505px;
  width: 80px;
  height: 62px;
  border-radius: 31px;
  box-sizing: border-box;
  background: rgba(245, 247, 253, 0.95);
  box-shadow: 0 0 6px rgba(60, 90, 150, 0.15);
  padding: 15px 0 0 17px;
}
.ime-bar {
  position: absolute;
  left: 1506px;
  top: 847px;
  width: 258px;
  height: 45px;
  box-sizing: border-box;
  padding-left: 11px;
  border-radius: 4px;
  background: #fff;
  box-shadow: 0 1px 4px rgba(0, 0, 0, 0.3);
  display: flex;
  align-items: center;
}
.ime-du {
  margin-right: 11.5px;
  flex: none;
}
.ime-slot {
  width: 39px;
  flex: none;
  display: flex;
  align-items: center;
  justify-content: center;
}
.ime-zh {
  font-size: 24px;
  color: #1677e8;
}
</style>
